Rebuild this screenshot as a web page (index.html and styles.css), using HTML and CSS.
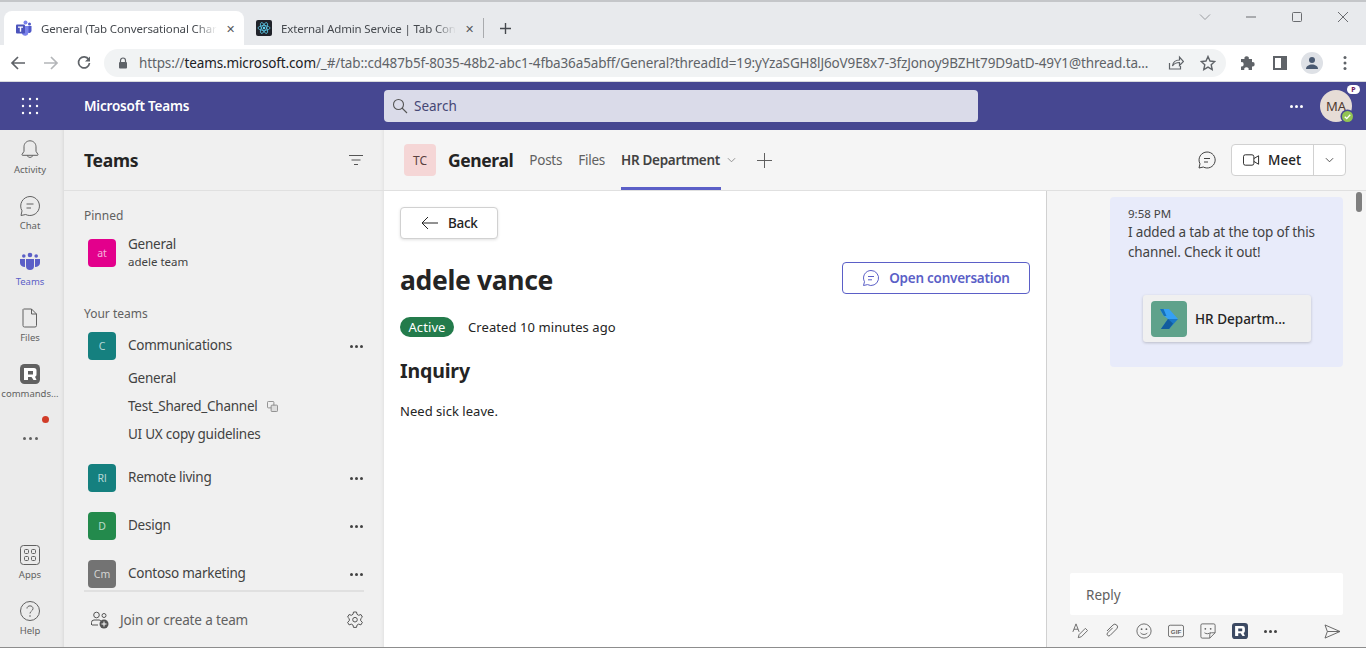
FILE: index.html
```html
<!DOCTYPE html>
<html lang="en">
<head>
  <meta charset="UTF-8">
  <title>General (Tab Conversational Channel) | Microsoft Teams</title>
  <link rel="stylesheet" href="styles.css">
</head>
<body>
  <!-- browser tabs -->
  <div class="tabstrip">
    <div class="tab tab-active">
      <svg class="favicon" viewBox="0 0 16 16"><circle cx="9.5" cy="2.5" r="2" fill="#7b83eb"/><circle cx="13.5" cy="4" r="1.5" fill="#5059c9"/><path d="M11 6h4.5v5a2.500 2.500 0 0 1-4.500 1z" fill="#5059c9"/><path d="M6 6h6.500v6.500a3.500 3.500 0 0 1-6.500 1.500z" fill="#7b83eb"/><rect x="0" y="4.500" width="9" height="9" rx="1" fill="#4b53bc"/><path d="M2 6.500h5v1.200H5.200v4H3.800v-4H2z" fill="#fff"/></svg>
      <span class="tab-title">General (Tab Conversational Char</span>
      <span class="tab-close">✕</span>
    </div>
    <div class="tab">
      <svg class="favicon" viewBox="0 0 16 16"><rect width="16" height="16" rx="2" fill="#20232a"/><g fill="none" stroke="#61dafb" stroke-width=".7"><ellipse cx="8" cy="8" rx="6" ry="2.400"/><ellipse cx="8" cy="8" rx="6" ry="2.400" transform="rotate(60 8 8)"/><ellipse cx="8" cy="8" rx="6" ry="2.400" transform="rotate(120 8 8)"/></g><circle cx="8" cy="8" r="1.200" fill="#61dafb"/></svg>
      <span class="tab-title">External Admin Service | Tab Con</span>
      <span class="tab-close">✕</span>
    </div>
    <div class="tab-sep"></div>
    <svg class="new-tab" viewBox="0 0 12 12"><path d="M6 0v12M0 6h12" stroke="#45494e" stroke-width="1.500"/></svg>
    <div class="window-controls">
      <svg viewBox="0 0 12 12"><path d="M1 3.500l5 5 5-5" fill="none" stroke="#9a9ca0"/></svg>
      <svg viewBox="0 0 12 12"><path d="M1 6h10" stroke="#6a6c70"/></svg>
      <svg viewBox="0 0 12 12"><rect x="1.500" y="1.500" width="9" height="9" rx="1" fill="none" stroke="#6a6c70"/></svg>
      <svg viewBox="0 0 12 12"><path d="M1 1l10 10M11 1L1 11" stroke="#6a6c70"/></svg>
    </div>
  </div>

  <!-- browser toolbar -->
  <div class="toolbar">
    <svg class="nav-icon" viewBox="0 0 16 16"><path d="M15 8H2M8 2L2 8l6 6" fill="none" stroke="#5f6368" stroke-width="1.700"/></svg>
    <svg class="nav-icon" viewBox="0 0 16 16"><path d="M1 8h13M8 2l6 6-6 6" fill="none" stroke="#b4b6b9" stroke-width="1.700"/></svg>
    <svg class="nav-icon" viewBox="0 0 16 16"><path d="M12.700 4.500A5.500 5.500 0 1 0 13.500 8" fill="none" stroke="#5f6368" stroke-width="1.700"/><path d="M14 1.500v5H9z" fill="#5f6368"/></svg>
    <div class="omnibox">
      <svg class="lock" viewBox="0 0 10 12"><path d="M2.500 5V3.500a2.500 2.500 0 0 1 5 0V5" fill="none" stroke="#5f6368" stroke-width="1.200"/><rect x="1" y="5" width="8" height="6.500" rx="1" fill="#5f6368"/></svg>
      <span class="url"><span class="url-dim">https://</span>teams.microsoft.com<span class="url-dim">/_#/tab::cd487b5f-8035-48b2-abc1-4fba36a5abff/General?threadId=19:yYzaSGH8lJ6oV9E8x7-3fzJonoy9BZHt79D9atD-49Y1@thread.ta...</span></span>
      <svg class="omni-icon" viewBox="0 0 16 16"><path d="M1.500 8v6h11v-3" fill="none" stroke="#5f6368" stroke-width="1.200"/><path d="M4.500 11c.5-4 3.500-6 7-6V2l4 4.500-4 4V7.500c-3 0-5.500 1-7 3.500z" fill="none" stroke="#5f6368" stroke-width="1.200"/></svg>
      <svg class="omni-icon" viewBox="0 0 16 16"><path d="M8 1.500l2 4.500 4.800.5-3.600 3.200 1 4.800L8 12.100l-4.200 2.400 1-4.800L1.200 6.500 6 6z" fill="none" stroke="#5f6368" stroke-width="1.400"/></svg>
    </div>
    <svg class="tool-icon ext" viewBox="0 0 16 16"><path d="M1 4h3.500a2.200 2.200 0 1 1 4.300 0H12v3.200a2.200 2.200 0 1 1 0 4.300V15H8.600a2.200 2.200 0 1 0-4.300 0H1v-3.500a2.200 2.200 0 1 0 0-4.300z" fill="#5f6368"/></svg>
    <svg class="tool-icon panel" viewBox="0 0 16 16"><rect x="2" y="2" width="12" height="12" fill="none" stroke="#5f6368" stroke-width="2"/><rect x="9" y="2" width="5" height="12" fill="#5f6368"/></svg>
    <div class="profile"><svg viewBox="0 0 16 16"><circle cx="8" cy="5" r="3" fill="#4a5a72"/><path d="M2 14c0-3 3-4.500 6-4.500s6 1.500 6 4.500z" fill="#4a5a72"/></svg></div>
    <svg class="kebab" viewBox="0 0 4 16"><circle cx="2" cy="2.500" r="1.500" fill="#5f6368"/><circle cx="2" cy="8" r="1.500" fill="#5f6368"/><circle cx="2" cy="13.500" r="1.500" fill="#5f6368"/></svg>
  </div>

  <!-- teams title bar -->
  <header class="appbar">
    <svg class="waffle" viewBox="0 0 18 18" fill="#fff"><circle cx="2" cy="2" r="1.200"/><circle cx="9" cy="2" r="1.200"/><circle cx="16" cy="2" r="1.200"/><circle cx="2" cy="9" r="1.200"/><circle cx="9" cy="9" r="1.200"/><circle cx="16" cy="9" r="1.200"/><circle cx="2" cy="16" r="1.200"/><circle cx="9" cy="16" r="1.200"/><circle cx="16" cy="16" r="1.200"/></svg>
    <div class="app-name">Microsoft Teams</div>
    <div class="search">
      <svg viewBox="0 0 16 16"><circle cx="6.500" cy="6.500" r="5" fill="none" stroke="#555" stroke-width="1.100"/><path d="M10 10l5 5" stroke="#555" stroke-width="1.100"/></svg>
      <span>Search</span>
    </div>
    <div class="app-more">
      <i></i><i></i><i></i>
    </div>
    <div class="me">
      MA
      <span class="me-tag">P</span>
      <span class="me-status"><svg viewBox="0 0 10 10"><path d="M2.500 5.200l1.800 1.700 3.200-3.500" fill="none" stroke="#fff" stroke-width="1.200"/></svg></span>
    </div>
  </header>

  <div class="app">
    <!-- left rail -->
    <nav class="rail">
      <div class="rail-item">
        <svg viewBox="0 0 20 20"><path d="M10 .8c-3.500 0-6 2.700-6 6v4.500l-2 3.200c-.2.400 0 .8.500.8h15c.5 0 .7-.4.500-.8l-2-3.200V6.800c0-3.300-2.500-6-6-6z M7.500 15.500c0 2.500 5 2.500 5 0" fill="none" stroke="#616161"/></svg>
        <span>Activity</span>
      </div>
      <div class="rail-item">
        <svg viewBox="0 0 20 20"><path d="M10 .5a9.500 9.500 0 1 1-4.300 18L1 19.500l1-4.700A9.500 9.500 0 0 1 10 .5z" fill="none" stroke="#616161"/><path d="M6.500 8h7M6.500 12h4.500" stroke="#616161"/></svg>
        <span>Chat</span>
      </div>
      <div class="rail-item rail-active">
        <svg viewBox="0 0 20 20" fill="#5b5fc7"><circle cx="10" cy="3" r="2.300"/><circle cx="3.800" cy="4" r="1.800"/><circle cx="16.200" cy="4" r="1.800"/><path d="M6 7h8v7a4 4 0 0 1-8 0z"/><path d="M0 7h5v8c-3 0-5-2-5-4zM15 7h5v4c0 2-2 4-5 4z"/></svg>
        <span>Teams</span>
      </div>
      <div class="rail-item">
        <svg viewBox="0 0 20 20"><path d="M3.500 1h8l5 5v11.500a1.500 1.500 0 0 1-1.500 1.500H4.500A1.500 1.500 0 0 1 3 17.500V1.500z M11.500 1v5h5" fill="none" stroke="#616161"/></svg>
        <span>Files</span>
      </div>
      <div class="rail-item">
        <svg viewBox="0 0 20 20"><rect width="20" height="20" rx="4.500" fill="#616161"/><path d="M4 4h10a2.500 2.500 0 0 1 2.500 2.500v4a2.500 2.500 0 0 1-1.500 2.300l1.500 3.200h-3l-2-3H8v3H4z M8 7v3.500h5V7z" fill="#fff" fill-rule="evenodd"/></svg>
        <span>commands...</span>
      </div>
      <div class="rail-item rail-more">
        <i></i><i></i><i></i>
        <span class="rail-dot"></span>
      </div>
      <div class="rail-spacer"></div>
      <div class="rail-item">
        <svg viewBox="0 0 20 20"><rect x=".5" y=".5" width="19" height="19" rx="3" fill="none" stroke="#616161"/><g fill="none" stroke="#616161"><rect x="4.500" y="4.500" width="4" height="4" rx="1"/><rect x="11.500" y="4.500" width="4" height="4" rx="1"/><rect x="4.500" y="11.500" width="4" height="4" rx="1"/><rect x="11.500" y="11.500" width="4" height="4" rx="1"/></g></svg>
        <span>Apps</span>
      </div>
      <div class="rail-item">
        <svg viewBox="0 0 20 20"><circle cx="10" cy="10" r="9.500" fill="none" stroke="#616161"/><path d="M7 7.500C7 4 13 4 13 7.500c0 2.500-3 2.500-3 5" fill="none" stroke="#616161"/><circle cx="10" cy="15" r=".8" fill="#616161"/></svg>
        <span>Help</span>
      </div>
    </nav>

    <!-- team list -->
    <aside class="teams">
      <div class="teams-head">
        <h2>Teams</h2>
        <svg class="filter" viewBox="0 0 14 10"><path d="M0 .5h14M2.500 5h9M5 9.500h4" stroke="#555"/></svg>
      </div>
      <div class="teams-scroll">
        <div class="group-label">Pinned</div>
        <div class="team pinned">
          <div class="avatar pink">at</div>
          <div>
            <div class="team-name">General</div>
            <div class="team-sub">adele team</div>
          </div>
        </div>
        <div class="group-label group-second">Your teams</div>
        <div class="team">
          <div class="avatar teal">C</div>
          <div class="team-name raised">Communications</div>
          <div class="dots"><i></i><i></i><i></i></div>
        </div>
        <div class="channels">
          <div class="channel">General</div>
          <div class="channel">Test_Shared_Channel
            <svg class="shared" viewBox="0 0 12 12"><rect x=".5" y=".5" width="7" height="7" rx="1" fill="none" stroke="#888"/><rect x="4.500" y="4.500" width="7" height="7" rx="1" fill="#ddd" stroke="#888"/></svg>
          </div>
          <div class="channel">UI UX copy guidelines</div>
        </div>
        <div class="team">
          <div class="avatar teal">Rl</div>
          <div class="team-name raised">Remote living</div>
          <div class="dots"><i></i><i></i><i></i></div>
        </div>
        <div class="team">
          <div class="avatar green">D</div>
          <div class="team-name raised">Design</div>
          <div class="dots"><i></i><i></i><i></i></div>
        </div>
        <div class="team">
          <div class="avatar gray">Cm</div>
          <div class="team-name raised">Contoso marketing</div>
          <div class="dots"><i></i><i></i><i></i></div>
        </div>
      </div>
      <div class="teams-foot">
        <svg class="join" viewBox="0 0 18 18"><circle cx="5.500" cy="4" r="2.800" fill="none" stroke="#555"/><circle cx="13" cy="4.500" r="2" fill="none" stroke="#555"/><path d="M.5 14v-2.500A2.500 2.500 0 0 1 3 9h5a2.500 2.500 0 0 1 2 1M1 14h6" fill="none" stroke="#555"/><circle cx="13" cy="13" r="4.500" fill="#555"/><path d="M13 10.500v5M10.500 13h5" stroke="#fff"/></svg>
        <span>Join or create a team</span>
        <svg class="gear" viewBox="0 0 18 18"><path d="M7.500 1h3l.5 2.300 1.700 1 2.200-.8 1.500 2.600-1.700 1.600v2l1.700 1.600-1.500 2.600-2.200-.8-1.700 1-.5 2.300h-3L7 14.100l-1.700-1-2.200.8-1.500-2.600L3.300 9.700v-2L1.600 6.100l1.500-2.600 2.200.8 1.700-1z" fill="none" stroke="#555"/><circle cx="9" cy="8.700" r="2.300" fill="none" stroke="#555"/></svg>
      </div>
    </aside>

    <main class="channel-view">
      <div class="channel-head">
        <div class="avatar tc">TC</div>
        <h2>General</h2>
        <div class="ch-tab">Posts</div>
        <div class="ch-tab">Files</div>
        <div class="ch-tab ch-tab-active">HR Department</div>
        <svg class="ch-chevron" viewBox="0 0 10 6"><path d="M1 1l4 4 4-4" fill="none" stroke="#888"/></svg>
        <svg class="ch-plus" viewBox="0 0 16 16"><path d="M8 0v16M0 8h16" stroke="#555"/></svg>
        <svg class="ch-chat" viewBox="0 0 20 20"><path d="M10 2a8 8 0 1 1-3.700 15L2 18l1-4.200A8 8 0 0 1 10 2z" fill="none" stroke="#424242"/><path d="M7 8.500h6M7 12h4" stroke="#424242"/></svg>
        <div class="meet">
          <div class="meet-main">
            <svg viewBox="0 0 18 12"><rect x=".5" y=".5" width="11" height="11" rx="2" fill="none" stroke="#242424"/><path d="M11.500 4.500l5-3v9l-5-3" fill="none" stroke="#242424"/></svg>
            Meet
          </div>
          <div class="meet-arrow"><svg viewBox="0 0 10 6"><path d="M1 1l4 4 4-4" fill="none" stroke="#424242"/></svg></div>
        </div>
      </div>

      <div class="channel-body">
        <section class="detail">
          <button class="back">
            <svg viewBox="0 0 18 14"><path d="M17 7H1M7 1L1 7l6 6" fill="none" stroke="#242424"/></svg>
            Back
          </button>
          <div class="detail-title">
            <h1>adele vance</h1>
            <button class="open-conv">
              <svg viewBox="0 0 18 18"><path d="M9 1.500a7.500 7.500 0 1 1-3.500 14.100L1.500 16.500l1-3.800A7.500 7.500 0 0 1 9 1.500z" fill="none" stroke="#5b5fc7"/><path d="M6 7.500h6M6 10.800h4" stroke="#5b5fc7"/></svg>
              Open conversation
            </button>
          </div>
          <div class="status-row">
            <span class="pill">Active</span>
            <span>Created 10 minutes ago</span>
          </div>
          <h3>Inquiry</h3>
          <p>Need sick leave.</p>
        </section>

        <section class="convo">
          <div class="scroll-thumb"></div>
          <div class="bubble">
            <div class="bubble-time">9:58 PM</div>
            <div class="bubble-text">I added a tab at the top of this channel. Check it out!</div>
            <div class="tab-card">
              <div class="tab-card-icon">
                <svg viewBox="0 0 18 20"><path d="M0 0h9l9 10H8L3 6z" fill="#35a0f5"/><path d="M0 0h3.500l3 7H4z" fill="#1670b8"/><path d="M8 10h10l-9 10H1z" fill="#1a78c9"/><path d="M8 10l5 4.500L9 20H1z" fill="#125c9e"/></svg>
              </div>
              <span>HR Departm...</span>
            </div>
          </div>
          <div class="composer">
            <div class="reply">Reply</div>
            <div class="compose-tools">
              <svg viewBox="0 0 18 18"><path d="M1 10L4.500 1 8 10M2.200 7h4.600" fill="none" stroke="#616161"/><path d="M7 16.500l1-3.500 7-7 2.500 2.500-7 7z" fill="none" stroke="#616161"/></svg>
              <svg viewBox="0 0 18 18"><path d="M7 6v8a2 2 0 0 0 4 0V3.500a3 3 0 0 0-6 0V13" fill="none" stroke="#616161" transform="rotate(45 9 9)"/></svg>
              <svg viewBox="0 0 18 18"><circle cx="9" cy="9" r="8" fill="none" stroke="#616161"/><circle cx="6.300" cy="7" r="1" fill="#616161"/><circle cx="11.700" cy="7" r="1" fill="#616161"/><path d="M5 11c2 2.500 6 2.500 8 0" fill="none" stroke="#616161"/></svg>
              <svg viewBox="0 0 18 14"><rect x=".5" y=".5" width="17" height="13" rx="2" fill="none" stroke="#616161"/><text x="9" y="10" font-size="7" font-weight="700" text-anchor="middle" fill="#616161" font-family="Liberation Sans">GIF</text></svg>
              <svg viewBox="0 0 18 18"><path d="M2.500 1h13A1.500 1.500 0 0 1 17 2.500V11l-6 6H2.500A1.500 1.500 0 0 1 1 15.500v-13A1.500 1.500 0 0 1 2.500 1z" fill="none" stroke="#616161"/><circle cx="6" cy="6.500" r="1" fill="#616161"/><circle cx="12" cy="6.500" r="1" fill="#616161"/><path d="M5 11c2 1.500 5 1.500 7-.5M17 11h-4a2 2 0 0 0-2 2v4" fill="none" stroke="#616161"/></svg>
              <svg viewBox="0 0 18 18"><rect width="18" height="18" rx="3.500" fill="#3c4a63"/><path d="M3.500 3.500h8.500a2.500 2.500 0 0 1 2.500 2.500v3a2.500 2.500 0 0 1-1.500 2.300l1.500 3.200h-2.700l-2-3H7v3H3.500z M7 6.200v3h4.500v-3z" fill="#fff" fill-rule="evenodd"/></svg>
              <div class="dots compose-dots"><i></i><i></i><i></i></div>
              <svg class="send" viewBox="0 0 18 16"><path d="M1 1l16 7-16 7 2.500-7zM3.500 8H17" fill="none" stroke="#616161"/></svg>
            </div>
          </div>
        </section>
      </div>
    </main>
  </div>
</body>
</html>
```

FILE: styles.css
```css
/* page frame */
* {
  box-sizing: border-box;
}

html,
body {
  height: 100%;
}

body {
  margin: 0;
  width: 1366px;
  height: 648px;
  overflow: hidden;
  display: flex;
  flex-direction: column;
  font-family: "Noto Sans", "Open Sans", sans-serif;
  color: #242424;
  background: #fff;
}

h1,
h2,
h3,
p {
  margin: 0;
}

svg {
  display: block;
  flex: none;
}

/* browser chrome */
.tabstrip {
  height: 45px;
  flex: none;
  display: flex;
  align-items: flex-end;
  padding-left: 4px;
  background: #e8eaed;
  border-top: 2px solid #c4c6c9;
}

.tab {
  width: 240px;
  height: 34px;
  display: flex;
  align-items: center;
  padding: 0 11px 0 12px;
  gap: 9px;
  font-size: 11.5px;
  color: #45494e;
  border-radius: 8px 8px 0 0;
}

.tab-active {
  background: #fff;
}

.favicon {
  width: 16px;
  height: 16px;
}

.tab-title {
  flex: 1;
  white-space: nowrap;
  letter-spacing: -0.15px;
  -webkit-mask-image: linear-gradient(to right, #000 88%, transparent 100%);
  mask-image: linear-gradient(to right, #000 88%, transparent 100%);
}

.tab-close {
  font-size: 11px;
  color: #55585c;
}

.tab-sep {
  width: 1px;
  height: 20px;
  margin: 0 0 7px -1px;
  background: #a9abae;
}

.new-tab {
  width: 11px;
  height: 11px;
  margin: 0 0 11px 16px;
}

.window-controls {
  margin-left: auto;
  align-self: flex-start;
  display: flex;
  gap: 34px;
  padding: 9px 17px 0 0;
}

.window-controls svg {
  width: 12px;
  height: 12px;
}

.toolbar {
  height: 37px;
  flex: none;
  display: flex;
  align-items: center;
  padding: 0 0 1px 10px;
  background: #fff;
  border-bottom: 1px solid #d8dadd;
}

.nav-icon {
  width: 16px;
  height: 16px;
  margin-right: 17px;
}

.omnibox {
  width: 1122px;
  height: 28px;
  margin-left: -5px;
  display: flex;
  align-items: center;
  padding: 0 10px 0 14px;
  border-radius: 14px;
  background: #f1f3f4;
  font-size: 13.5px;
}

.lock {
  width: 10px;
  height: 12px;
  margin-right: 11px;
}

.url {
  flex: 1;
  min-width: 0;
  white-space: nowrap;
  letter-spacing: -0.13px;
  color: #202124;
}

.url-dim {
  color: #5f6368;
}

.omni-icon {
  width: 16px;
  height: 16px;
  margin-left: 16px;
}

.tool-icon {
  width: 16px;
  height: 16px;
}

.ext {
  margin-left: 14px;
}

.panel {
  margin-left: 16px;
}

.profile {
  width: 22px;
  height: 22px;
  margin-left: 13px;
  padding: 3px;
  border-radius: 50%;
  background: #dee1e6;
}

.kebab {
  width: 4px;
  height: 16px;
  margin-left: 20px;
}

/* teams title bar */
.appbar {
  height: 48px;
  flex: none;
  display: flex;
  align-items: center;
  background: #464791;
  color: #fff;
}

.waffle {
  width: 18px;
  height: 18px;
  margin-left: 21px;
}

.app-name {
  width: 300px;
  margin-left: 45px;
  font-size: 13.5px;
  font-weight: 600;
  letter-spacing: -0.2px;
}

.search {
  width: 594px;
  height: 32px;
  display: flex;
  align-items: center;
  gap: 6px;
  padding-left: 8px;
  border-radius: 4px;
  background: #dadbe9;
  color: #464775;
  font-size: 13.5px;
}

.search svg {
  width: 16px;
  height: 16px;
}

.app-more {
  margin-left: auto;
  display: flex;
  gap: 2px;
}

.app-more i {
  width: 3px;
  height: 3px;
  background: #fff;
  border-radius: 50%;
}

.me {
  position: relative;
  width: 32px;
  height: 32px;
  margin: 0 14px 0 17px;
  display: flex;
  align-items: center;
  justify-content: center;
  border-radius: 50%;
  background: #e6dcd6;
  color: #4f3a30;
  font-size: 13px;
}

.me-tag {
  position: absolute;
  top: -5px;
  right: -8px;
  width: 13px;
  height: 9px;
  border-radius: 5px;
  background: #fff;
  color: #6b1a5e;
  font-size: 7px;
  font-weight: 700;
  line-height: 9px;
  text-align: center;
}

.me-status {
  position: absolute;
  right: -1px;
  bottom: 0;
  width: 11px;
  height: 11px;
  border-radius: 50%;
  background: #92c353;
  box-shadow: 0 0 0 1.5px #464791;
}

/* app body */
.app {
  flex: 1;
  min-height: 0;
  display: flex;
  border-bottom: 1px solid #8d8d8d;
}

.rail {
  width: 64px;
  flex: none;
  display: flex;
  flex-direction: column;
  background: #ebebeb;
  box-shadow: inset -4px 0 4px -4px rgba(0, 0, 0, 0.12);
}

.rail-item {
  height: 56px;
  flex: none;
  display: flex;
  flex-direction: column;
  align-items: center;
  padding: 10px 4px 0 0;
  gap: 3px;
  font-size: 9.5px;
  color: #616161;
  white-space: nowrap;
}

.rail-item svg {
  width: 20px;
  height: 20px;
}

.rail-active {
  color: #5b5fc7;
}

.rail-more {
  position: relative;
  flex-direction: row;
  justify-content: center;
  gap: 3px;
  padding-top: 0;
}

.rail-more i {
  width: 3px;
  height: 3px;
  border-radius: 50%;
  background: #616161;
}

.rail-dot {
  position: absolute;
  top: 6px;
  left: 42px;
  width: 7px;
  height: 7px;
  border-radius: 50%;
  background: #d13c28;
}

.rail-spacer {
  flex: 1;
}

/* team list */
.teams {
  width: 320px;
  flex: none;
  display: flex;
  flex-direction: column;
  background: #f0f0f0;
  box-shadow: inset -4px 0 4px -4px rgba(0, 0, 0, 0.1);
}

.teams-head {
  height: 61px;
  flex: none;
  display: flex;
  align-items: center;
  justify-content: space-between;
  padding: 0 21px 0 20px;
  border-bottom: 1px solid #e0e0e0;
}

.teams-head h2 {
  font-size: 17.5px;
  font-weight: 700;
  letter-spacing: -0.3px;
}

.filter {
  width: 14px;
  height: 10px;
}

.teams-scroll {
  height: 399px;
  flex: none;
  padding-top: 16px;
  overflow: hidden;
}

.group-label {
  height: 18px;
  margin-left: 20px;
  font-size: 12px;
  line-height: 18px;
  color: #616161;
}

.group-second {
  margin: 24px 0 -1px 20px;
}

.team {
  height: 48px;
  display: flex;
  align-items: center;
  padding: 0 21px 0 24px;
  font-size: 13.5px;
  color: #424242;
}

.pinned {
  height: 56px;
}

.team-name {
  letter-spacing: -0.25px;
  line-height: 18px;
}

.raised {
  margin-bottom: 2px;
}

.team .dots {
  margin-left: auto;
}

.team-sub {
  font-size: 11.5px;
  line-height: 18px;
}

.avatar {
  width: 28px;
  height: 28px;
  margin-right: 12px;
  flex: none;
  display: flex;
  align-items: center;
  justify-content: center;
  border-radius: 4px;
  color: rgba(255, 255, 255, 0.7);
  font-size: 10.5px;
}

.pink {
  background: #e3008c;
}

.teal {
  background: #15807f;
}

.green {
  background: #238a4c;
}

.gray {
  background: #737373;
}

.tc {
  width: 32px;
  height: 32px;
  background: #f5d6d6;
  color: #5a4040;
  font-size: 12px;
}

.channels {
  margin: -6px 0 6px;
}

.channel {
  height: 28px;
  display: flex;
  align-items: center;
  gap: 9px;
  padding-left: 64px;
  font-size: 13.5px;
  letter-spacing: -0.25px;
  color: #424242;
}

.shared {
  width: 11px;
  height: 11px;
}

.dots {
  display: flex;
  gap: 2px;
}

.dots i {
  width: 3px;
  height: 3px;
  border-radius: 50%;
  background: #424242;
}

.teams-foot {
  flex: 1;
  display: flex;
  align-items: center;
  margin: 0 20px;
  border-top: 2px solid #e0e0e0;
  font-size: 13.5px;
  color: #616161;
  letter-spacing: -0.15px;
}

.join {
  width: 18px;
  height: 18px;
  margin: 0 11px 0 7px;
}

.gear {
  width: 18px;
  height: 18px;
  margin-left: auto;
}

/* channel view */
.channel-view {
  flex: 1;
  min-width: 0;
  display: flex;
  flex-direction: column;
}

.channel-head {
  height: 61px;
  flex: none;
  display: flex;
  align-items: center;
  padding: 0 20px;
  background: #f5f5f5;
  border-bottom: 1px solid #e0e0e0;
  font-size: 13.5px;
  color: #616161;
}

.channel-head h2 {
  margin-right: 16px;
  font-size: 17.5px;
  font-weight: 700;
  letter-spacing: -0.4px;
  color: #242424;
}

.ch-tab {
  height: 100%;
  display: flex;
  align-items: center;
  margin-right: 16px;
  border-bottom: 3px solid transparent;
  border-top: 3px solid transparent;
  letter-spacing: -0.25px;
}

.ch-tab-active {
  margin-right: 0;
  width: 100px;
  white-space: nowrap;
  border-bottom-color: #5b5fc7;
  font-weight: 600;
  color: #424242;
  letter-spacing: -0.3px;
}

.ch-chevron {
  width: 9px;
  height: 6px;
  margin-left: 6px;
}

.ch-plus {
  width: 15px;
  height: 15px;
  margin-left: 21px;
}

.ch-chat {
  width: 20px;
  height: 20px;
  margin-left: auto;
  margin-right: 14px;
}

.meet {
  width: 115px;
  height: 32px;
  display: flex;
  background: #fff;
  border: 1px solid #d1d1d1;
  border-radius: 4px;
  color: #242424;
  font-weight: 500;
  font-size: 13.5px;
}

.meet-main {
  width: 82px;
  display: flex;
  align-items: center;
  gap: 8px;
  padding-left: 11px;
  border-right: 1px solid #d1d1d1;
}

.meet-main svg {
  width: 17px;
  height: 12px;
}

.meet-arrow {
  flex: 1;
  display: flex;
  align-items: center;
  justify-content: center;
}

.meet-arrow svg {
  width: 9px;
  height: 6px;
}

.channel-body {
  flex: 1;
  min-height: 0;
  display: flex;
}

.detail {
  width: 662px;
  flex: none;
  padding: 16px 16px 0;
  background: #fff;
  font-size: 13px;
}

.back {
  width: 98px;
  height: 32px;
  display: flex;
  align-items: center;
  gap: 9px;
  padding: 0 0 0 20px;
  background: #fff;
  border: 1px solid #d1d1d1;
  border-radius: 4px;
  box-shadow: 0 1px 3px rgba(0, 0, 0, 0.12);
  font: 500 13.5px "Noto Sans", sans-serif;
  letter-spacing: -0.3px;
  color: #242424;
}

.back svg {
  width: 18px;
  height: 14px;
}

.detail-title {
  display: flex;
  align-items: center;
  justify-content: space-between;
  margin-top: 23px;
  height: 32px;
}

.detail-title h1 {
  margin-top: 4px;
  font-size: 26.5px;
  font-weight: 700;
  letter-spacing: -0.35px;
}

.open-conv {
  width: 188px;
  height: 32px;
  display: flex;
  align-items: center;
  justify-content: center;
  gap: 9px;
  background: #fff;
  border: 1px solid #5b5fc7;
  border-radius: 4px;
  font: 600 13.5px "Noto Sans", sans-serif;
  letter-spacing: -0.25px;
  color: #5b5fc7;
}

.open-conv svg {
  width: 18px;
  height: 18px;
}

.status-row {
  display: flex;
  align-items: center;
  gap: 14px;
  margin-top: 23px;
  letter-spacing: 0.08px;
}

.pill {
  width: 54px;
  height: 20px;
  display: flex;
  align-items: center;
  justify-content: center;
  border-radius: 10px;
  background: #237b4b;
  color: #fff;
}

.detail h3 {
  margin-top: 20px;
  font-size: 19.5px;
  font-weight: 700;
  line-height: 28px;
  letter-spacing: -0.15px;
}

.detail p {
  margin-top: 17px;
  line-height: 18px;
  letter-spacing: 0.03px;
}

/* conversation pane */
.convo {
  position: relative;
  flex: 1;
  display: flex;
  flex-direction: column;
  justify-content: space-between;
  padding: 6px 23px 0 63px;
  background: #f5f5f5;
  border-left: 1px solid #d1d1d1;
}

.scroll-thumb {
  position: absolute;
  top: 1px;
  right: 4px;
  width: 6px;
  height: 20px;
  border-radius: 3px;
  background: #7f7f7f;
}

.bubble {
  height: 170px;
  padding: 9px 18px;
  border-radius: 4px;
  background: #e8ebfa;
}

.bubble-time {
  font-size: 11.5px;
  line-height: 16px;
  color: #424242;
}

.bubble-text {
  font-size: 13.5px;
  line-height: 20px;
  letter-spacing: -0.15px;
  color: #424242;
}

.tab-card {
  width: 168px;
  height: 47px;
  margin: 33px 0 0 15px;
  display: flex;
  align-items: center;
  gap: 8px;
  padding-left: 8px;
  border-radius: 3px;
  background: #f0f0f0;
  box-shadow: 0 1px 3px rgba(0, 0, 0, 0.2);
  font-size: 13.5px;
  font-weight: 500;
  white-space: nowrap;
}

.tab-card-icon {
  width: 36px;
  height: 36px;
  padding: 8px 9px;
  border-radius: 4px;
  background: #5fa28b;
}

.composer {
  margin-left: -40px;
}

.reply {
  height: 42px;
  display: flex;
  align-items: center;
  padding: 2px 0 0 16px;
  border-radius: 2px;
  background: #fff;
  font-size: 13.5px;
  color: #616161;
}

.compose-tools {
  height: 32px;
  display: flex;
  align-items: center;
  gap: 16px;
  padding: 0 2px;
}

.compose-tools svg {
  width: 16px;
  height: 16px;
}

.compose-dots {
  margin-left: 0;
}

.compose-tools .send {
  width: 17px;
  height: 15px;
  margin-left: auto;
}
```
